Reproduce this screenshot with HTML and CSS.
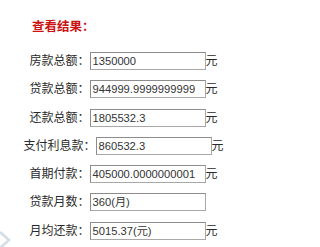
FILE: index.html
```html
<!DOCTYPE html>
<html>
<head>
<meta charset="utf-8">
<link rel="stylesheet" href="styles.css">
</head>
<body>
<div class="page">
  <div class="title">查看结果：</div>
  <div class="rows">
    <div class="row"><span class="label">房款总额：</span><span class="box">1350000</span><span class="unit">元</span></div>
    <div class="row"><span class="label">贷款总额：</span><span class="box">944999.9999999999</span><span class="unit">元</span></div>
    <div class="row"><span class="label">还款总额：</span><span class="box">1805532.3</span><span class="unit">元</span></div>
    <div class="row"><span class="label">支付利息款：</span><span class="box">860532.3</span><span class="unit">元</span></div>
    <div class="row"><span class="label">首期付款：</span><span class="box">405000.0000000001</span><span class="unit">元</span></div>
    <div class="row"><span class="label">贷款月数：</span><span class="box">360(月)</span><span class="unit"></span></div>
    <div class="row"><span class="label">月均还款：</span><span class="box">5015.37(元)</span><span class="unit">元</span></div>
  </div>
  <svg class="chevron" width="14" height="18" viewBox="0 0 14 18"><path d="M0 2 L9 10 L0 18" fill="none" stroke="#d3dde6" stroke-width="2.5"/></svg>
</div>
</body>
</html>
```
FILE: styles.css
```css
html, body {
  margin: 0;
  padding: 0;
  background: #ffffff;
}
.page {
  position: relative;
  width: 265px;
  height: 247px;
  overflow: hidden;
  font-family: "Liberation Sans", "Noto Sans CJK SC", sans-serif;
  color: #333;
}
.title {
  padding: 20px 0 0 32px;
  height: 14px;
  line-height: 14px;
  font-size: 12.5px;
  font-weight: bold;
  color: #cc1111;
}
.rows {
  display: flex;
  flex-direction: column;
  gap: 10.3px;
  margin-top: 18px;
  width: 247px;
}
.row {
  display: flex;
  justify-content: center;
  align-items: center;
  height: 18px;
}
.label {
  font-size: 12px;
  line-height: 18px;
  white-space: nowrap;
  color: #2a2a2a;
}
.box {
  box-sizing: border-box;
  width: 116px;
  height: 18px;
  border: 1px solid #a8a8a8;
  border-top-color: #8c8c8c;
  border-left-color: #8c8c8c;
  background: #fff;
  padding-left: 2px;
  font-size: 11.2px;
  line-height: 16px;
  color: #333;
  white-space: nowrap;
  overflow: hidden;
}
.unit {
  width: 12px;
  font-size: 12px;
  line-height: 18px;
  color: #2a2a2a;
}
.chevron {
  position: absolute;
  left: 0;
  top: 230px;
}
```
